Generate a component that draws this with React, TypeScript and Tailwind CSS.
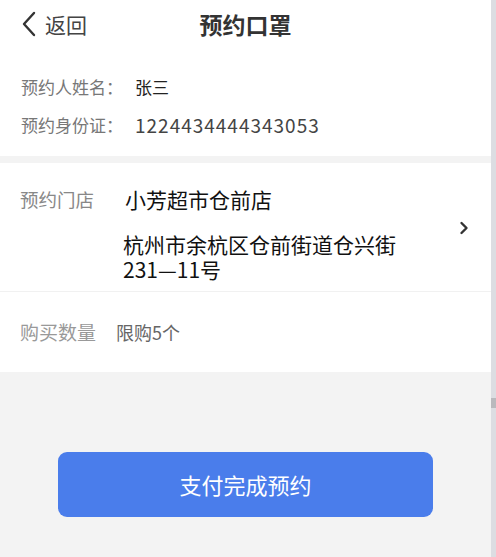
export default function App() {
  return (
    <div
      className="flex h-[557px] w-[496px] overflow-hidden bg-[#f3f3f3]"
      style={{ fontFamily: '"Noto Sans CJK SC", "Noto Sans", sans-serif' }}
    >
      <div className="flex flex-1 flex-col">
        <div className="bg-white h-[156px]">
          <div className="relative flex h-[48px] items-center">
            <div className="flex items-center pl-[20px] text-[#333]">
              <svg width="18" height="26" viewBox="0 0 18 26" fill="none">
                <path d="M14 2 L4 13 L14 24" stroke="#333" strokeWidth="2.4" strokeLinecap="round" strokeLinejoin="round" />
              </svg>
              <span className="ml-[7px] text-[21px] leading-none text-[#444]">返回</span>
            </div>
            <div className="absolute left-0 right-0 text-center text-[23px] font-bold text-[#333] pointer-events-none">
              预约口罩
            </div>
          </div>
          <div className="mt-[20px] px-[21px]">
            <div className="flex h-[38px] items-center text-[17px]">
              <span className="text-[#777]">预约人姓名：</span>
              <span className="ml-[12px] text-[#222]">张三</span>
            </div>
            <div className="flex h-[38px] items-center text-[17px]">
              <span className="text-[#777]">预约身份证：</span>
              <span className="ml-[12px] text-[19px] tracking-[1px] text-[#444]">1224434444343053</span>
            </div>
          </div>
        </div>

        <div className="mt-[7px] bg-white">
          <div className="flex items-center pl-[20px] pr-[22px] border-b border-[#f1f1f1] h-[129px]">
            <div className="flex flex-1 self-start pt-[22px]">
              <div className="w-[103px] text-[18.5px] leading-[28px] text-[#888]">预约门店</div>
              <div className="flex flex-col text-[21px] text-[#111]">
                <div className="leading-[28px] pl-[2px]">小芳超市仓前店</div>
                <div className="mt-[19px] leading-[25px] w-[290px]">杭州市余杭区仓前街道仓兴街231—11号</div>
              </div>
            </div>
            <svg width="10" height="14" viewBox="0 0 10 14" fill="none" className="mt-[2px]">
              <path d="M2.5 2 L7.5 7 L2.5 12" stroke="#333" strokeWidth="2.4" strokeLinecap="round" strokeLinejoin="round" />
            </svg>
          </div>
          <div className="flex h-[80px] items-center pl-[20px]">
            <span className="text-[19px] text-[#999]">购买数量</span>
            <span className="ml-[20px] text-[18px] text-[#666]">限购5个</span>
          </div>
        </div>

        <div className="flex justify-center pt-[80px]">
          <button className="h-[65px] w-[375px] rounded-[9px] bg-[#4a7deb] text-[22px] text-white">
            支付完成预约
          </button>
        </div>
      </div>
      <div className="w-[5px] bg-[#dcdde2] flex flex-col">
        <div className="mt-[398px] h-[10px] bg-[#b9b9bd]" />
      </div>
    </div>
  );
}
